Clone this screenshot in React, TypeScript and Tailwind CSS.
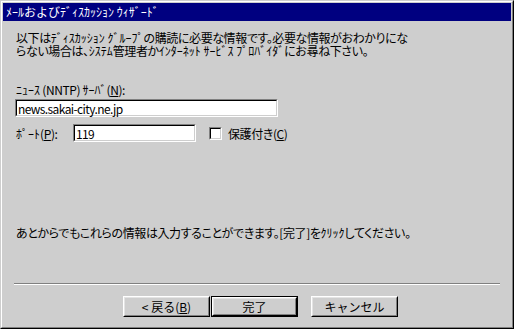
import React from "react";

const font = "font-['Noto_Sans_CJK_JP','Liberation_Sans',sans-serif]";
const body = "[font-feature-settings:'palt'] tracking-[-0.4px]";

function U({ children }: { children: React.ReactNode }) {
  return <span className="underline underline-offset-[1px]">{children}</span>;
}

// halfwidth kana runs: keep their natural width
function K({ children }: { children: React.ReactNode }) {
  return <span className="[font-feature-settings:normal] tracking-normal">{children}</span>;
}

function Field({ value, width }: { value: string; width: string }) {
  return (
    <div className={`h-[18px] ${width} border border-t-[#808080] border-l-[#808080] border-r-white border-b-white`}>
      <div className="flex h-full items-center border border-t-black border-l-black border-r-[#cecece] border-b-[#cecece] bg-white pl-[1px] text-[12px] tracking-[-0.6px] text-black">
        {value}
      </div>
    </div>
  );
}

function Button({ label, isDefault }: { label: React.ReactNode; isDefault?: boolean }) {
  const inner = (
    <div className="h-full w-full border border-t-white border-l-white border-r-black border-b-black">
      <div className="flex h-full w-full items-center justify-center border border-t-[#e4e4e4] border-l-[#e4e4e4] border-r-[#808080] border-b-[#808080] text-[12px] text-black">
        {label}
      </div>
    </div>
  );
  return (
    <div className={`h-[21px] w-[87px] ${isDefault ? "border border-black" : ""}`}>{inner}</div>
  );
}

export default function App() {
  return (
    <div className={`h-[329px] w-[514px] bg-[#cecece] ${font}`}>
      <div className="h-full w-full border border-t-[#cecece] border-l-[#cecece] border-r-black border-b-black">
        <div className="flex h-full w-full flex-col border border-t-white border-l-white border-r-[#808080] border-b-[#808080] p-[1px]">
          <div className="flex h-[18px] items-center bg-[#000080] pl-[3px] text-[12px] text-white">
            ﾒｰﾙおよびﾃﾞｨｽｶｯｼｮﾝ ｳｨｻﾞｰﾄﾞ
          </div>

          <div className={`flex flex-col pl-[13px] text-[12px] leading-[13px] text-black ${body}`}>
            <p className="mt-[10px]">
              以下は<K>ﾃﾞｨｽｶｯｼｮﾝ ｸﾞﾙｰﾌﾟ</K>の購読に必要な情報です。必要な情報がおわかりにな
              <br />
              らない場合は、<K>ｼｽﾃﾑ</K>管理者か<K>ｲﾝﾀｰﾈｯﾄ ｻｰﾋﾞｽ ﾌﾟﾛﾊﾞｲﾀﾞ</K>にお尋ね下さい。
            </p>

            <div className="mt-[26px]">
              <K>ﾆｭｰｽ</K> (NNTP) <K>ｻｰﾊﾞ</K>(<U>N</U>):
            </div>
            <div className="mt-[3px] -ml-[1px]">
              <Field value="news.sakai-city.ne.jp" width="w-[263px]" />
            </div>

            <div className="mt-[7px] flex items-center">
              <div className="w-[57px]">
                <K>ﾎﾟｰﾄ</K>(<U>P</U>):
              </div>
              <Field value="119" width="w-[123px]" />
              <div className="ml-[13px] h-[13px] w-[13px] border border-t-[#808080] border-l-[#808080] border-r-white border-b-white">
                <div className="h-full w-full border border-t-black border-l-black border-r-[#cecece] border-b-[#cecece] bg-white" />
              </div>
              <div className="ml-[6px]">
                保護付き(<U>C</U>)
              </div>
            </div>

            <p className="mt-[84px]">
              あとからでもこれらの情報は入力することができます。[完了]を<K>ｸﾘｯｸ</K>してください。
            </p>
          </div>

          <div className="mx-[11px] mt-[44px] border-t border-b border-t-[#808080] border-b-white" />

          <div className="mt-[11px] flex pl-[120px]">
            <Button
              label={
                <span>
                  &lt; 戻る(<U>B</U>)
                </span>
              }
            />
            <div className="ml-[1px]">
              <Button label="完了" isDefault />
            </div>
            <div className="ml-[13px]">
              <Button label="キャンセル" />
            </div>
          </div>
        </div>
      </div>
    </div>
  );
}
